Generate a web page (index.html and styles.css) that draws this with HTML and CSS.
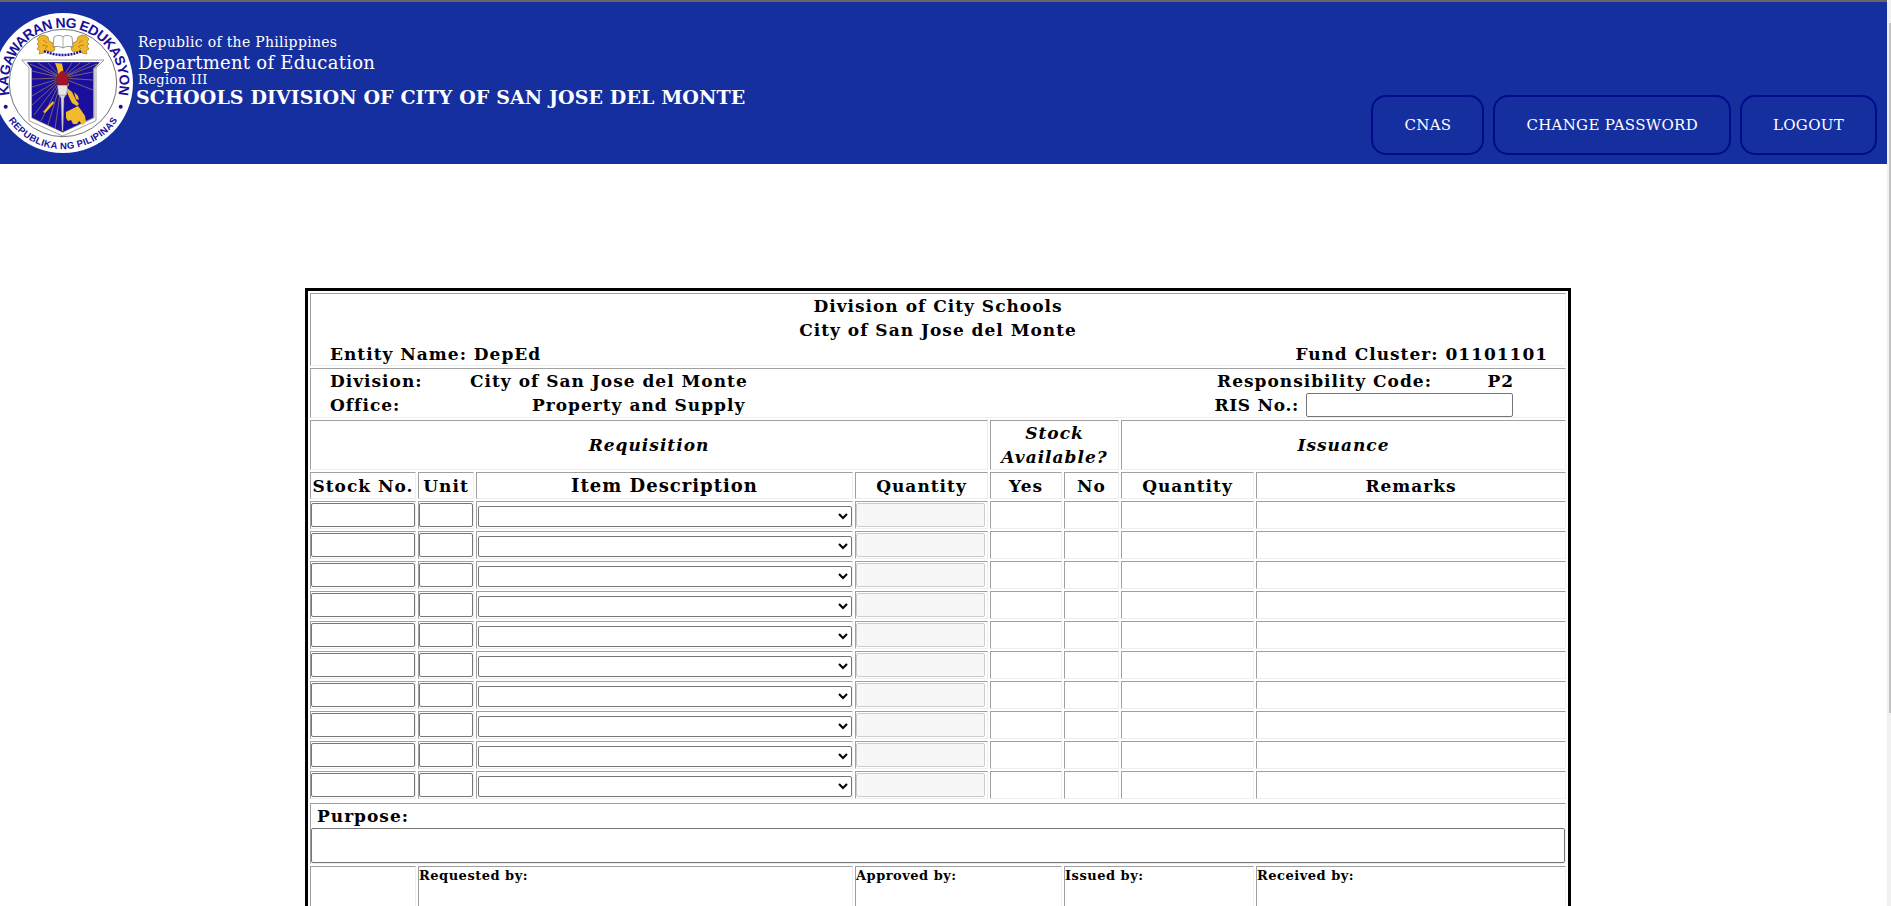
FILE: index.html
```html
<!DOCTYPE html>
<html lang="en">
<head>
<meta charset="utf-8">
<title>Requisition and Issue Slip</title>
<link rel="stylesheet" href="styles.css">
</head>
<body>
<div class="page">
<header class="topbar">
  <svg class="seal" viewBox="-7 13 140 140" width="140" height="140" aria-label="Department of Education seal">
    <circle cx="63" cy="83" r="70" fill="#fff"/>
    <circle cx="63" cy="83" r="53.7" fill="none" stroke="#333" stroke-width="0.7"/>
    <defs>
      <path id="arcTop" d="M 9.7 94.5 A 55.500 55.500 0 1 1 118.3 94.5"/>
      <path id="arcBottom" d="M 7.6 119 A 66 66 0 0 0 118.4 119"/>
    </defs>
    <text class="seal-top"><textPath href="#arcTop" startOffset="50%" text-anchor="middle" textLength="198">KAGAWARAN NG EDUKASYON</textPath></text>
    <text class="seal-bottom"><textPath href="#arcBottom" startOffset="50%" text-anchor="middle" textLength="128">REPUBLIKA NG PILIPINAS</textPath></text>
    <circle cx="5.7" cy="106.7" r="2" fill="#1a0f9c"/>
    <circle cx="120.7" cy="106.7" r="2" fill="#1a0f9c"/>
    <!-- crest -->
    <path d="M40 36l4-1 4 2 1 4 4 2 2 4-1 4-5 1-3-2-2 3-5 1 1-3-3-2 2-3-2-2 2-2-2-3z" fill="#f2b62b" stroke="#8a6a10" stroke-width=".6"/>
    <path d="M43 40l4 3M42 45l5 1M45 49l3-3" stroke="#8a6a10" stroke-width=".6" fill="none"/>
    <path d="M86 36l-4-1-4 2-1 4-4 2-2 4 1 4 5 1 3-2 2 3 5 1-1-3 3-2-2-3 2-2-2-2 2-3z" fill="#f2b62b" stroke="#8a6a10" stroke-width=".6"/>
    <path d="M83 40l-4 3M84 45l-5 1M81 49l-3-3" stroke="#8a6a10" stroke-width=".6" fill="none"/>
    <path d="M54 37c3-2 7-2 9 0 2-2 6-2 9 0l1 10c-3-1-7-1-10 1-3-2-7-2-10-1z" fill="#fff" stroke="#555" stroke-width=".6"/>
    <path d="M63 37v11" stroke="#555" stroke-width=".5"/>
    <path d="M44 51q19 8 38 0" fill="none" stroke="#1a0f9c" stroke-width="2.4" stroke-dasharray="2 1"/>
    <!-- shield -->
    <path d="M21.7 60H104L96 68V120.7L62.7 136L29 120.7V68Z" fill="#fff" stroke="#777" stroke-width=".7"/>
    <path d="M26.5 62.3H100L94.5 69V118L62.7 132.7L31.3 118V69Z" fill="#8f8f8f"/>
    <path d="M27 62.3H99.5L93 68.5V117.5L62.7 132L32 117.5V68.5Z" fill="#1a0f9c"/>
    <g stroke="#d9b04a" stroke-width=".5">
      <path d="M62 78L30 64M62 78L38 63M62 78L48 63M62 78L72 63M62 78L80 63M62 78L90 63M62 78L97 64M62 78L93 72M62 78L93 80M62 78L93 90M62 78L32 71M62 78L32 79M62 78L32 87M62 78L32 96M62 78L32 105M62 78L34 115M62 78L41 121M62 78L48 125M62 78L55 129"/>
    </g>
    <path d="M55 63l7 .5 1 5 .5 5 4 6 1.500 6-3 0-5-3-2-6-2-8zM67 88l5 4 4 8 3 4-2 2-5-3-3-6-2-5zM74 92l4 4 1 4-3-1z" fill="#f2bb2c"/>
    <path d="M66 112l6-3 6-3 3 4 4 6 1 6-3 3-4-4-2 3-4 0-2-4-3 1-2-3zM43 112l7-8 3-3 1 2-6 7-3 3z" fill="#f2bb2c"/>
    <path d="M59 95h7l-2 3-1 33h-1l-1-33z" fill="#d9d9d9" stroke="#777" stroke-width=".4"/>
    <path d="M57.500 85h10l-1 10h-8z" fill="#e6e6e6" stroke="#888" stroke-width=".4"/>
    <path d="M62.500 71c3 1 6 5 6 9 0 3-1 4-1 5h-10c0-1-1-2-1-5 0-4 3-8 6-9z" fill="#a3142a" stroke="#5a0a18" stroke-width=".4"/>
  </svg>
  <div class="agency">
    <div class="agency-republic">Republic of the Philippines</div>
    <div class="agency-dept">Department of Education</div>
    <div class="agency-region">Region III</div>
    <div class="agency-division">SCHOOLS DIVISION OF CITY OF SAN JOSE DEL MONTE</div>
  </div>
  <nav class="nav">
    <a class="nav-btn">CNAS</a>
    <a class="nav-btn">CHANGE PASSWORD</a>
    <a class="nav-btn">LOGOUT</a>
  </nav>
</header>

<main class="content">
<table class="ris">
  <colgroup>
    <col class="c-stock"><col class="c-unit"><col class="c-item"><col class="c-qty"><col class="c-yes"><col class="c-no"><col class="c-qty"><col class="c-remarks">
  </colgroup>
  <tr class="r-title">
    <td colspan="8">
      <div class="title-line">Division of City Schools</div>
      <div class="title-line">City of San Jose del Monte</div>
      <div class="entity"><span>Entity Name: DepEd</span><span>Fund Cluster: 01101101</span></div>
    </td>
  </tr>
  <tr class="r-office">
    <td colspan="8">
      <div class="office">
        <div class="office-left">
          <div class="office-line"><span class="lbl">Division:</span><span class="val-division">City of San Jose del Monte</span></div>
          <div class="office-line"><span class="lbl lbl-office">Office:</span><span class="val-office">Property and Supply</span></div>
        </div>
        <div class="office-right">
          <div class="resp"><span>Responsibility Code:</span><span>P2</span></div>
          <div class="risno"><span class="ris-label">RIS No.:</span><input class="ris-input" type="text"></div>
        </div>
      </div>
    </td>
  </tr>
  <tr class="r-group">
    <th colspan="4"><em>Requisition</em></th>
    <th colspan="2"><em>Stock<br>Available?</em></th>
    <th colspan="2"><em>Issuance</em></th>
  </tr>
  <tr class="r-head">
    <th>Stock No.</th><th>Unit</th><th class="th-item">Item Description</th><th>Quantity</th><th>Yes</th><th>No</th><th>Quantity</th><th>Remarks</th>
  </tr>
  <tr class="r-data"><td><input class="f" type="text"></td><td><input class="f" type="text"></td><td><select class="sel"><option></option></select></td><td><input class="f f-off" type="text" disabled></td><td></td><td></td><td></td><td></td></tr>
  <tr class="r-data"><td><input class="f" type="text"></td><td><input class="f" type="text"></td><td><select class="sel"><option></option></select></td><td><input class="f f-off" type="text" disabled></td><td></td><td></td><td></td><td></td></tr>
  <tr class="r-data"><td><input class="f" type="text"></td><td><input class="f" type="text"></td><td><select class="sel"><option></option></select></td><td><input class="f f-off" type="text" disabled></td><td></td><td></td><td></td><td></td></tr>
  <tr class="r-data"><td><input class="f" type="text"></td><td><input class="f" type="text"></td><td><select class="sel"><option></option></select></td><td><input class="f f-off" type="text" disabled></td><td></td><td></td><td></td><td></td></tr>
  <tr class="r-data"><td><input class="f" type="text"></td><td><input class="f" type="text"></td><td><select class="sel"><option></option></select></td><td><input class="f f-off" type="text" disabled></td><td></td><td></td><td></td><td></td></tr>
  <tr class="r-data"><td><input class="f" type="text"></td><td><input class="f" type="text"></td><td><select class="sel"><option></option></select></td><td><input class="f f-off" type="text" disabled></td><td></td><td></td><td></td><td></td></tr>
  <tr class="r-data"><td><input class="f" type="text"></td><td><input class="f" type="text"></td><td><select class="sel"><option></option></select></td><td><input class="f f-off" type="text" disabled></td><td></td><td></td><td></td><td></td></tr>
  <tr class="r-data"><td><input class="f" type="text"></td><td><input class="f" type="text"></td><td><select class="sel"><option></option></select></td><td><input class="f f-off" type="text" disabled></td><td></td><td></td><td></td><td></td></tr>
  <tr class="r-data"><td><input class="f" type="text"></td><td><input class="f" type="text"></td><td><select class="sel"><option></option></select></td><td><input class="f f-off" type="text" disabled></td><td></td><td></td><td></td><td></td></tr>
  <tr class="r-data"><td><input class="f" type="text"></td><td><input class="f" type="text"></td><td><select class="sel"><option></option></select></td><td><input class="f f-off" type="text" disabled></td><td></td><td></td><td></td><td></td></tr>
  <tr class="r-gap"><td colspan="8"></td></tr>
  <tr class="r-purpose">
    <td colspan="8">
      <div class="purpose-label">Purpose:</div>
      <input class="purpose-input" type="text">
    </td>
  </tr>
  <tr class="r-sign">
    <td></td>
    <td colspan="2">Requested by:</td>
    <td colspan="2">Approved by:</td>
    <td colspan="2">Issued by:</td>
    <td>Received by:</td>
  </tr>
</table>
</main>
</div>
<div class="scroll-track"></div>
<div class="scroll-thumb"></div>
</body>
</html>
```
FILE: styles.css
```css
* { box-sizing: border-box; }
html, body { margin: 0; height: 906px; overflow: hidden; background: #fff; }
body { font-family: "DejaVu Serif", serif; color: #000; }
.page { width: 1887px; }

.topbar {
  display: flex;
  height: 164px;
  background: #162f9f;
  border-top: 2px solid #666;
  color: #fff;
}
.seal { flex: none; margin: 11px 0 0 -7px; }
.seal-top { font: bold 14px "Liberation Sans", sans-serif; fill: #1a0f9c; }
.seal-bottom { font: bold 9.5px "Liberation Sans", sans-serif; fill: #1a0f9c; }

.agency { margin-left: 5px; padding-top: 30px; flex: 1; white-space: nowrap; }
.agency-republic { font-size: 14px; line-height: 20px; letter-spacing: .3px; }
.agency-dept { font-size: 18px; line-height: 22px; letter-spacing: .26px; }
.agency-region { font-size: 13px; line-height: 12px; letter-spacing: .4px; }
.agency-division { font-size: 19px; line-height: 22px; font-weight: bold; letter-spacing: .1px; margin-left: -2px; }

.nav { display: flex; align-items: flex-end; gap: 9px; padding: 0 10px 9px 0; }
.nav-btn {
  display: flex;
  align-items: center;
  height: 60px;
  padding: 0 31px;
  border: 2px solid #000b8c;
  border-radius: 15px;
  font-size: 15px;
  letter-spacing: .3px;
  color: #fff;
}

.content { margin: 124px 0 0 305px; }
.ris {
  table-layout: fixed;
  width: 1266px;
  border-collapse: separate;
  border-spacing: 2px;
  border: 3px solid #000;
  font-size: 17px;
  letter-spacing: 1px;
}
.c-stock { width: 106px; }
.c-unit { width: 56px; }
.c-item { width: 377px; }
.c-qty { width: 133px; }
.c-yes { width: 72px; }
.c-no { width: 55px; }
.c-remarks { width: 310px; }

.ris td, .ris th {
  padding: 0;
  border: 1px solid;
  border-color: #a0a0a0 #eee #eee #a0a0a0;
}
.ris th { font-weight: bold; text-align: center; }
.ris .th-item { font-size: 18px; }

.r-title td { height: 73px; font-weight: bold; line-height: 24px; vertical-align: top; }
.title-line { text-align: center; }
.entity { display: flex; justify-content: space-between; height: 23px; padding: 0 17px 0 19px; }

.r-office td { height: 50px; font-weight: bold; }
.office { display: flex; justify-content: space-between; line-height: 24px; }
.office-left { padding-left: 19px; }
.office-line { display: flex; }
.lbl { width: 140px; }
.val-office { margin-left: 62px; }
.office-right { width: 354px; padding-right: 52px; }
.resp { display: flex; justify-content: space-between; margin-right: -1px; padding-left: 6px; }
.risno { display: flex; justify-content: flex-end; align-items: flex-end; gap: 7px; }
.ris-label { flex: none; white-space: nowrap; letter-spacing: .7px; }
.ris-input { flex: none; width: 207px; height: 24px; }

.r-group th { height: 50px; line-height: 24px; }
.r-head th { height: 27px; }

.r-data td { height: 28px; }
.f, .sel, .ris-input, .purpose-input {
  display: block;
  margin: 0;
  padding: 0 2px;
  background: #fff;
  border: 1px solid #767676;
  border-radius: 2px;
  font: 13px "DejaVu Sans", sans-serif;
}
.f { width: 104px; height: 24px; }
.r-data td:nth-child(2) .f { width: 54px; }
.r-data td:nth-child(4) .f-off { width: 129px; background: #f7f7f7; border-color: #ccc; }
.sel { width: 374px; height: 21px; margin: 3px 0 0 1px; }

.ris .r-gap td { height: 0; border: 0; padding: 0; }

.r-purpose td { height: 61px; vertical-align: top; }
.purpose-label { height: 24px; padding-left: 6px; font-weight: bold; line-height: 25px; }
.purpose-input { width: 1254px; height: 35px; }

.r-sign td { height: 110px; vertical-align: top; font-size: 13px; letter-spacing: .5px; font-weight: bold; line-height: 18px; }

.scroll-track { position: fixed; top: 0; right: 0; bottom: 0; width: 4px; background: #f1f1f1; }
.scroll-thumb { position: fixed; top: 23px; right: 0; width: 2px; height: 690px; background: #c1c1c1; }
```
